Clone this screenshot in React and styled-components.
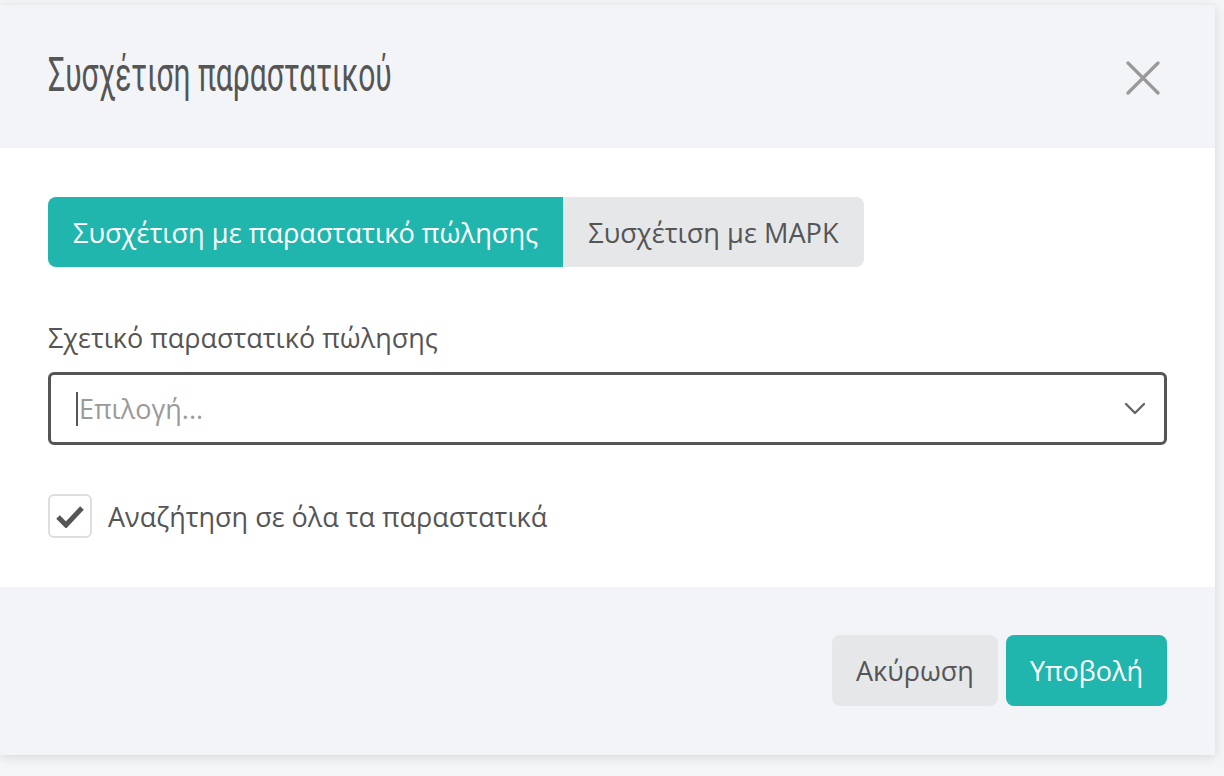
import React, { useState } from 'react';
import styled, { createGlobalStyle } from 'styled-components';

const TEAL = '#21b6ad';
const GREY_BTN = '#e6e7e9';
const TEXT = '#555555';

const GlobalStyle = createGlobalStyle`
  html, body {
    margin: 0;
    padding: 0;
    background: #f4f5f7;
    font-family: "Open Sans", "Noto Sans", sans-serif;
    overflow: hidden;
  }
`;

const Backdrop = styled.div`
  width: 1224px;
  height: 776px;
  padding-top: 5px;
  box-sizing: border-box;
  background: #f4f5f7;
`;

const Modal = styled.div`
  width: 1215px;
  height: 750px;
  display: flex;
  flex-direction: column;
  background: #fff;
  box-shadow: 0 2px 10px rgba(0, 0, 0, 0.12);
`;

const Header = styled.header`
  height: 143px;
  flex: none;
  box-sizing: border-box;
  padding: 0 52px 0 48px;
  display: flex;
  align-items: center;
  justify-content: space-between;
  background: #f3f4f7;
`;

const Title = styled.h1`
  margin: 0;
  margin-top: -4px;
  font-family: Roboto, "Noto Sans", sans-serif;
  font-weight: 400;
  font-size: 48px;
  line-height: 1;
  color: ${TEXT};
  transform: scaleX(0.625);
  transform-origin: left center;
  white-space: nowrap;
`;

const CloseButton = styled.button`
  border: 0;
  background: transparent;
  padding: 0;
  width: 40px;
  height: 40px;
  display: flex;
  align-items: center;
  justify-content: center;
  cursor: pointer;
  margin-top: 2px;
`;

const Body = styled.section`
  flex: none;
  height: 439px;
  box-sizing: border-box;
  padding: 49px 48px 0;
  display: flex;
  flex-direction: column;
`;

const Tabs = styled.div`
  display: flex;
`;

const Tab = styled.button`
  height: 70px;
  border: 0;
  padding: 0 25px;
  font-family: "Open Sans", "Noto Sans", sans-serif;
  font-size: 27.2px;
  background: ${(p) => (p.$active ? TEAL : GREY_BTN)};
  color: ${(p) => (p.$active ? '#fff' : TEXT)};
  cursor: pointer;

  &:first-child {
    border-radius: 8px 0 0 8px;
  }
  &:last-child {
    border-radius: 0 8px 8px 0;
  }
`;

const Label = styled.label`
  margin-top: 53px;
  font-size: 27px;
  color: ${TEXT};
  line-height: 36px;
`;

const Select = styled.div`
  margin-top: 16px;
  height: 73px;
  box-sizing: border-box;
  border: 3px solid ${TEXT};
  border-radius: 6px;
  display: flex;
  align-items: center;
  padding: 0 18px 0 25px;
`;

const Caret = styled.span`
  width: 2px;
  height: 34px;
  background: ${TEXT};
  margin-right: 1px;
`;

const Placeholder = styled.span`
  flex: 1;
  font-size: 27px;
  color: #9a9a9a;
`;

const CheckRow = styled.div`
  margin-top: 49px;
  display: flex;
  align-items: center;
  gap: 16px;
`;

const Box = styled.span`
  width: 44px;
  height: 44px;
  box-sizing: border-box;
  border: 2px solid #dedede;
  border-radius: 6px;
  display: flex;
  align-items: center;
  justify-content: center;
`;

const CheckLabel = styled.span`
  font-size: 27px;
  color: ${TEXT};
`;

const Footer = styled.footer`
  flex: 1;
  box-sizing: border-box;
  background: #f3f4f7;
  padding: 48px 48px 0;
  display: flex;
  justify-content: flex-end;
  align-items: flex-start;
  gap: 8px;
`;

const Button = styled.button`
  height: 71px;
  border: 0;
  border-radius: 8px;
  padding: 0 24px;
  font-family: "Open Sans", "Noto Sans", sans-serif;
  font-size: 27px;
  background: ${(p) => (p.$primary ? TEAL : GREY_BTN)};
  color: ${(p) => (p.$primary ? '#fff' : TEXT)};
  cursor: pointer;
`;

export default function App() {
  const [tab, setTab] = useState(0);
  const [all, setAll] = useState(true);

  return (
    <Backdrop>
      <GlobalStyle />
      <Modal>
        <Header>
          <Title>Συσχέτιση παραστατικού</Title>
          <CloseButton aria-label="close">
            <svg width="34" height="34" viewBox="0 0 34 34">
              <path d="M2 2 L32 32 M32 2 L2 32" stroke="#999" strokeWidth="3.2" strokeLinecap="round" />
            </svg>
          </CloseButton>
        </Header>
        <Body>
          <Tabs>
            <Tab $active={tab === 0} onClick={() => setTab(0)}>Συσχέτιση με παραστατικό πώλησης</Tab>
            <Tab $active={tab === 1} onClick={() => setTab(1)}>Συσχέτιση με MAPK</Tab>
          </Tabs>
          <Label>Σχετικό παραστατικό πώλησης</Label>
          <Select>
            <Caret />
            <Placeholder>Επιλογή...</Placeholder>
            <svg width="22" height="14" viewBox="0 0 22 14">
              <path d="M2 2 L11 11 L20 2" stroke="#666" strokeWidth="2.4" fill="none" strokeLinecap="round" strokeLinejoin="round" />
            </svg>
          </Select>
          <CheckRow onClick={() => setAll(!all)}>
            <Box>
              {all && (
                <svg width="28" height="24" viewBox="0 0 28 24">
                  <path d="M2 13 L10 21 L26 4" stroke="#555" strokeWidth="5" fill="none" strokeLinejoin="miter" />
                </svg>
              )}
            </Box>
            <CheckLabel>Αναζήτηση σε όλα τα παραστατικά</CheckLabel>
          </CheckRow>
        </Body>
        <Footer>
          <Button>Ακύρωση</Button>
          <Button $primary>Υποβολή</Button>
        </Footer>
      </Modal>
    </Backdrop>
  );
}
